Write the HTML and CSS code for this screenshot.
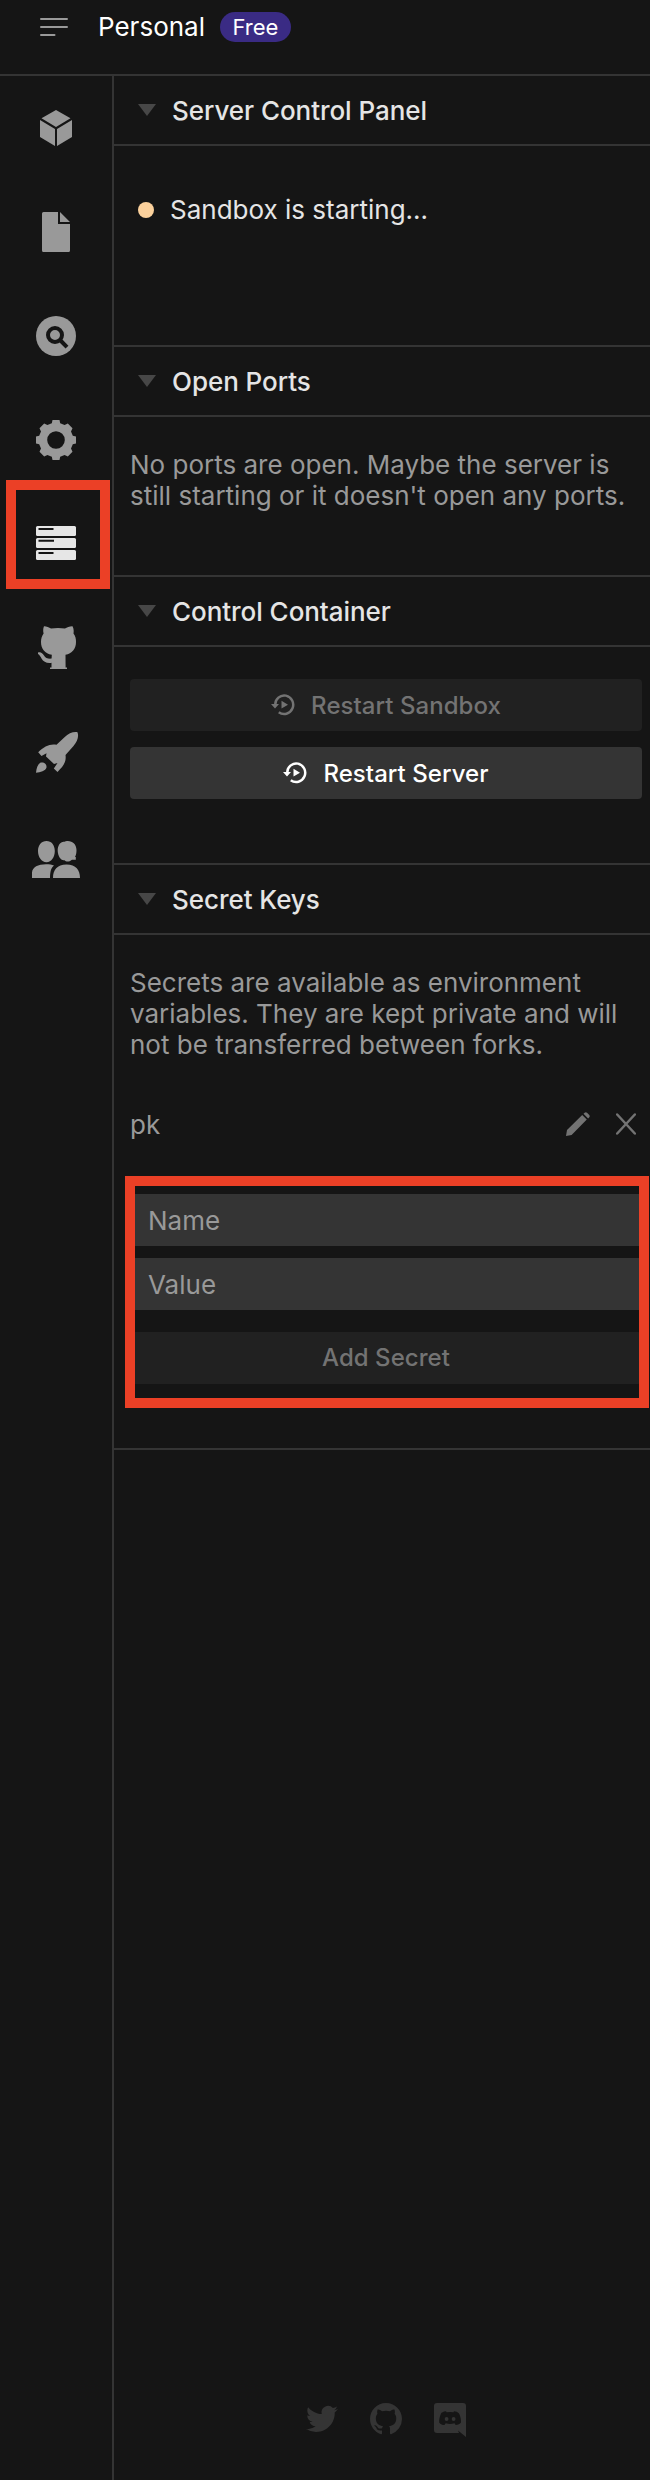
FILE: index.html
```html
<!DOCTYPE html>
<html lang="en">
<head>
<meta charset="utf-8">
<title>Server Control Panel</title>
<link rel="stylesheet" href="styles.css">
</head>
<body>
<header class="topbar">
  <svg class="menu-icon" viewBox="0 0 28 18"><path d="M1 1H27M1 9H27M1 17H14.500" stroke="currentColor" stroke-width="2" stroke-linecap="round"/></svg>
  <span class="team">Personal</span>
  <span class="badge">Free</span>
</header>
<div class="workspace">
  <nav class="rail">
    <a class="rail-item"><svg viewBox="0 0 60 60"><path d="M30 12L44.500 20.300L30 29L15.500 20.300ZM14 22L29 31V48L14 39ZM31 31L46 22V39L31 48Z"/></svg></a>
    <a class="rail-item"><svg viewBox="0 0 60 60"><path d="M17.500 10H32V22H44V48.500Q44 50 42.500 50H17.500Q16 50 16 48.500V11.500Q16 10 17.500 10ZM34 10L44 20H34Z"/></svg></a>
    <a class="rail-item"><svg viewBox="0 0 60 60"><circle cx="30" cy="30" r="20"/><circle class="cut" cx="29" cy="29" r="7"/><path class="cut" d="M34 34L41 41.200"/></svg></a>
    <a class="rail-item"><svg viewBox="0 0 60 60"><path fill-rule="evenodd" d="M26.500 10H33.500L34.200 13.200L38.600 15L41.800 13.500L46.500 18.200L45 21.400L46.800 25.800L50 26.500V33.500L46.800 34.200L45 38.600L46.500 41.800L41.800 46.500L38.600 45L34.200 46.800L33.500 50H26.500L25.800 46.800L21.400 45L18.200 46.500L13.500 41.800L15 38.600L13.200 34.200L10 33.500V26.500L13.200 25.800L15 21.400L13.500 18.200L18.200 13.500L21.400 15L25.800 13.200ZM30 21.200A8.800 8.800 0 1 0 30 38.800A8.800 8.800 0 1 0 30 21.200Z"/></svg></a>
    <a class="rail-item active"><svg viewBox="0 0 60 60"><rect x="10" y="12" width="40" height="10" rx="1.500"/><rect x="10" y="24" width="40" height="10" rx="1.500"/><rect x="10" y="36" width="40" height="10" rx="1.500"/><path class="slot" d="M12.500 15H27.500M12.500 26.800H28M12.500 39H27.500"/></svg></a>
    <a class="rail-item"><svg viewBox="0 0 60 60"><path d="M18 8.200C20 8 23 9.500 25 10.600Q32 9.400 39 10.600C41 9.500 44 8 46.500 8.200C48 11 47.800 13.500 47.500 15.500C49.500 18 50 21 50 24C50 31 46 35.500 39.500 36.800L39.600 49.500H41V51H24V49.500H25.500V44.800C21 45.500 17.500 44 15.500 40.500C14.500 38.500 13.600 37 12 36V34.500C14.500 33.500 16.500 35 18 37.500C19.500 40 22 41 25.600 40.600L25.800 36.800C19 35.500 15 31 15 24C15 21 15.800 18 17.600 15.500C17 13 17 10.500 18 8.200Z"/></svg></a>
    <a class="rail-item"><svg viewBox="0 0 60 60"><path d="M51.500 10.200C47 9.500 42.500 11.500 38.500 15.200L30.500 22.800C24 21.500 18 24.500 12.200 30.200L15.500 34L20.500 31.200L20 34.500L28 42L31.500 41L27.800 46.500L31.500 50C37.500 44 40.500 39.500 39.500 33L47.500 24C51.500 19.500 53 14.500 51.500 10.200ZM10 50.700C10.500 46 11.500 42.500 14.200 40.700C18 39.500 21 42 20.500 45.500C19.500 49 14.500 50.300 10 50.700Z"/></svg></a>
    <a class="rail-item"><svg viewBox="0 0 60 60"><path d="M20.500 15C25.500 15 28.800 19 28.800 25C28.800 31 25.500 36.200 20.500 36.200C15.500 36.200 12 31 12 25C12 19 15.500 15 20.500 15ZM6 52V46.500C6.500 41 12 38.200 20 38.200C23.500 38.200 26 38.500 28 39.500C25 42 24.200 45 24 52ZM41 15C46.500 14.600 50.500 18.500 50.500 24C50.500 27 50 29 49 31H49.800V33.700H46C43 36.200 40 36 38.500 34.200C35 35.200 32 30 31.700 25C31.500 19 35 15 38.500 15.800Q39.500 15 41 15ZM27 52C27 44 31 38.500 40.500 38.500C50 38.500 54 44 54 52Z"/></svg></a>
    <span class="highlight highlight-rail"></span>
  </nav>
  <main class="panel">
    <section class="section status">
      <h2 class="section-title">Server Control Panel</h2>
      <div class="section-body"><p class="state">Sandbox is starting...</p></div>
    </section>
    <section class="section ports">
      <h2 class="section-title">Open Ports</h2>
      <div class="section-body"><p class="note">No ports are open. Maybe the server is<br>still starting or it doesn't open any ports.</p></div>
    </section>
    <section class="section control">
      <h2 class="section-title">Control Container</h2>
      <div class="section-body">
        <button class="button" disabled><svg class="restart-icon" viewBox="0 0 24 22"><path d="M4.200 11A9 9.300 0 1 1 7.800 18.200" fill="none" stroke="currentColor" stroke-width="2.500"/><path d="M0 10H8L4 14.500ZM10.500 6.800L17 10.700L10.500 14.600Z" fill="currentColor"/></svg><span>Restart Sandbox</span></button>
        <button class="button"><svg class="restart-icon" viewBox="0 0 24 22"><path d="M4.200 11A9 9.300 0 1 1 7.800 18.200" fill="none" stroke="currentColor" stroke-width="2.500"/><path d="M0 10H8L4 14.500ZM10.500 6.800L17 10.700L10.500 14.600Z" fill="currentColor"/></svg><span>Restart Server</span></button>
      </div>
    </section>
    <section class="section secrets">
      <h2 class="section-title">Secret Keys</h2>
      <div class="section-body">
        <p class="note">Secrets are available as environment<br>variables. They are kept private and will<br>not be transferred between forks.</p>
        <div class="secret">
          <span class="secret-name">pk</span>
          <svg class="edit-icon" viewBox="0 0 24 24"><path d="M0 24L1 18L16.200 3L20.800 7.600L5.600 23ZM17.500 1.800L18.600.7Q19.800-.3 21 .7L23.300 3Q24.300 4.200 23.300 5.300L22.100 6.400Z"/></svg>
          <svg class="remove-icon" viewBox="0 0 20 22"><path d="M1.200 1.500L18.800 20.500M18.800 1.500L1.200 20.500"/></svg>
        </div>
        <form class="secret-form">
          <input class="field" type="text" placeholder="Name">
          <input class="field" type="text" placeholder="Value">
          <button class="button" disabled>Add Secret</button>
          <span class="highlight highlight-form"></span>
        </form>
      </div>
    </section>
    <footer class="social">
      <svg viewBox="0 0 24 24"><path d="M23.953 4.570a10 10 0 0 1-2.825.775 4.958 4.958 0 0 0 2.163-2.723c-.951.555-2.005.959-3.127 1.184a4.920 4.920 0 0 0-8.384 4.482C7.690 8.095 4.067 6.130 1.640 3.162a4.822 4.822 0 0 0-.666 2.475c0 1.710.870 3.213 2.188 4.096a4.904 4.904 0 0 1-2.228-.616v.060a4.923 4.923 0 0 0 3.946 4.827 4.996 4.996 0 0 1-2.212.085 4.936 4.936 0 0 0 4.604 3.417 9.867 9.867 0 0 1-6.102 2.105c-.390 0-.779-.023-1.170-.067a13.995 13.995 0 0 0 7.557 2.209c9.053 0 13.998-7.496 13.998-13.985 0-.210 0-.420-.015-.630A9.935 9.935 0 0 0 24 4.590z"/></svg>
      <svg viewBox="0 0 16 16"><path d="M8 0C3.580 0 0 3.580 0 8c0 3.540 2.290 6.530 5.470 7.590.400.070.550-.170.550-.380 0-.190-.010-.820-.010-1.490-2.010.370-2.530-.490-2.690-.940-.090-.230-.480-.940-.820-1.130-.280-.150-.680-.520-.010-.530.630-.010 1.080.580 1.230.820.720 1.210 1.870.870 2.330.660.070-.520.280-.870.510-1.070-1.780-.200-3.640-.890-3.640-3.950 0-.870.310-1.590.820-2.150-.080-.200-.360-1.020.080-2.120 0 0 .670-.210 2.200.820.640-.180 1.320-.270 2-.270s1.360.090 2 .270c1.530-1.040 2.200-.820 2.200-.820.440 1.100.160 1.920.080 2.120.510.560.820 1.270.820 2.150 0 3.070-1.870 3.750-3.650 3.950.290.250.540.730.540 1.480 0 1.070-.010 1.930-.010 2.200 0 .210.150.460.550.380A8.013 8.013 0 0 0 16 8c0-4.420-3.580-8-8-8z"/></svg>
      <svg viewBox="0 0 32 34"><path fill-rule="evenodd" d="M3 1H29Q32 1 32 4V35L24 28.500L25 31H3Q0 31 0 28V4Q0 1 3 1ZM12 9.200C9 9.500 7.500 10.500 7 11.500C5.500 15 5 18 5.200 20.500C6.500 22.500 8.500 23 10.500 23L11.700 21.200Q16 22.800 20.500 21.200L21.700 23C24 23 26 22 27 20.500C27 17 26.500 14 25 11.500C23.500 10 22 9.300 20 9.200L19.500 10.200Q16 9.600 12.600 10.200Z"/><ellipse cx="12.600" cy="17" rx="1.900" ry="2"/><ellipse cx="19.600" cy="17" rx="1.900" ry="2"/></svg>
    </footer>
  </main>
</div>
</body>
</html>
```
FILE: styles.css
```css
* { box-sizing: border-box; }
body {
  margin: 0;
  height: 2480px;
  display: flex;
  flex-direction: column;
  background: #151515;
  color: #e5e5e5;
  font: 400 26px/31px Inter, "Liberation Sans", sans-serif;
  letter-spacing: 0;
}
h2, p { margin: 0; }
svg { display: block; flex: none; }
.topbar {
  display: flex;
  align-items: flex-start;
  height: 76px;
  padding: 12px 0 0 40px;
  border-bottom: 2px solid #343434;
}
.menu-icon { width: 28px; height: 18px; margin: 6px 30px 0 0; color: #999; }
.team { width: 122px; line-height: 30px; color: #fff; }
.badge {
  width: 71px;
  height: 30px;
  border-radius: 15px;
  background: #3a2b84;
  color: #fff;
  font-size: 22px;
  line-height: 30px;
  text-align: center;
}
.workspace { flex: 1; display: flex; }
.rail { position: relative; width: 114px; border-right: 2px solid #343434; }
.rail-item { display: flex; align-items: center; justify-content: center; height: 104px; color: #999; }
.rail-item svg { width: 60px; height: 60px; fill: currentColor; }
.rail-item.active { color: #e6e6e6; }
.rail-item .cut { fill: none; stroke: #151515; stroke-width: 4; }
.rail-item .slot { stroke: #151515; stroke-width: 2; }
.highlight { position: absolute; border: 10px solid #eb4026; pointer-events: none; }
.highlight-rail { left: 6px; top: 404px; width: 104px; height: 109px; }
.panel { flex: 1; display: flex; flex-direction: column; }
.section { border-bottom: 2px solid #343434; }
.section-title {
  display: flex;
  align-items: center;
  height: 70px;
  padding-left: 24px;
  border-bottom: 2px solid #343434;
  font-size: 26px;
  font-weight: 500;
  letter-spacing: -0.05px;
}
.section-title::before {
  content: "";
  width: 18px;
  height: 12px;
  margin-right: 16px;
  background: #474747;
  clip-path: polygon(0 0, 100% 0, 50% 100%);
}
.section-body { padding: 32px 8px 0 16px; }
.status .section-body { height: 199px; padding: 48px 0 0 24px; }
.ports .section-body { height: 158px; }
.control .section-body { height: 216px; display: flex; flex-direction: column; gap: 16px; }
.secrets .section-body { height: 513px; }
.state { display: flex; align-items: center; }
.state::before {
  content: "";
  width: 16px;
  height: 16px;
  margin-right: 16px;
  border-radius: 50%;
  background: #fbd19c;
}
.note { color: #999; white-space: nowrap; }
.button {
  display: flex;
  align-items: center;
  justify-content: center;
  gap: 16px;
  width: 100%;
  height: 52px;
  padding: 0;
  border: 0;
  border-radius: 4px;
  background: #343434;
  color: #fff;
  font: 500 24px/30px Inter, "Liberation Sans", sans-serif;
  letter-spacing: 0.05px;
}
.button span { padding-top: 1px; }
.button:disabled { background: #212121; color: #737373; }
.restart-icon { width: 24px; height: 22px; }
.secret { display: flex; align-items: center; height: 32px; margin-top: 48px; color: #999; }
.secret-name { flex: 1; }
.edit-icon { width: 24px; height: 24px; margin-right: 26px; fill: #737373; overflow: visible; }
.remove-icon { width: 20px; height: 22px; margin-right: 6px; stroke: #737373; stroke-width: 2.500; stroke-linecap: round; }
.secret-form { position: relative; margin-top: 54px; }
.field {
  display: block;
  width: 100%;
  height: 52px;
  margin-bottom: 12px;
  padding: 0 18px;
  border: 0;
  background: #343434;
  font: inherit;
  letter-spacing: inherit;
  color: #e5e5e5;
}
.field::placeholder { color: #999; opacity: 1; }
.secret-form .button { margin-top: 22px; }
.highlight-form { left: -5px; top: -18px; width: 524px; height: 232px; }
.social { display: flex; gap: 32px; margin: auto 0 44px 192px; }
.social svg { width: 32px; height: 34px; fill: #343434; overflow: visible; }
```
